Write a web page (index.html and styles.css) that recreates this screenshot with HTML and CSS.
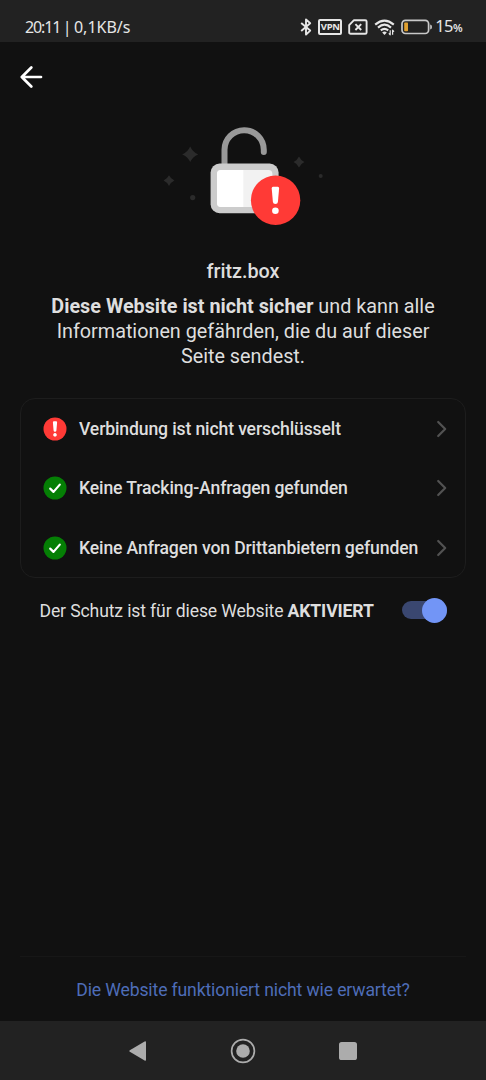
FILE: index.html
```
<!DOCTYPE html>
<html lang="de">

<head>
     <meta charset="UTF-8" />
     <title>Datenschutz - fritz.box</title>
     <meta name="viewport" content="width=device-width, initial-scale=1" />
     <link rel="stylesheet" href="styles.css">
</head>

<body>

     <div class="status-bar">
          <span class="clock"><span class="time">20:11</span> | 0,1KB/s</span>
          <div class="status-icons">
               <svg class="bluetooth" width="12" height="18" viewBox="0 0 12 18">
                    <path d="M1.2 5 L10.2 12.6 L6 16.6 V1.4 L10.2 5.2 L1.2 13" />
               </svg>
               <span class="vpn">VPN</span>
               <svg class="sim" width="20" height="16" viewBox="0 0 20 16">
                    <path d="M6 1.2 H17.2 Q18.6 1.2 18.6 2.6 V13.4 Q18.6 14.8 17.2 14.8 H2.6 Q1.2 14.8 1.2 13.4 V6.2 Z" />
                    <path d="M7.4 5.2 L13.2 11 M13.2 5.2 L7.4 11" />
               </svg>
               <svg class="wifi" width="22" height="18" viewBox="0 0 22 18">
                    <path d="M1.2 6.6 Q10.5 -1.4 19.8 6.6" />
                    <path d="M4 9.6 Q10.5 3.8 17 9.6" />
                    <path d="M6.8 12.4 Q10.5 9.2 14.2 12.4" />
                    <path class="wifi-dot" d="M8.2 14.4 Q10.5 12.8 12.8 14.4 L10.5 17 Z" />
                    <path class="wifi-arrows" d="M16.2 12.2 V16.8 L14.8 15.4 M18.6 16.8 V12.2 L20 13.6" />
               </svg>
               <svg class="battery" width="32" height="16" viewBox="0 0 32 16">
                    <rect class="battery-case" x="1" y="1.3" width="26.6" height="13.2" rx="3.4" />
                    <rect class="battery-level" x="3.2" y="3.6" width="3.8" height="8.6" rx="0.8" />
                    <path class="battery-tip" d="M29.2 5.4 Q31 5.8 31 7.9 Q31 10 29.2 10.4 Z" />
               </svg>
               <span class="percent">15<small>%</small></span>
          </div>
     </div>

     <main>
          <button class="back-btn" aria-label="Zurück">
               <svg width="24" height="24" viewBox="0 0 24 24">
                    <path d="M21 12 H2.5 M11.3 2.5 L1.8 12 L11.3 21.5" />
               </svg>
          </button>

          <svg class="hero" width="190" height="130" viewBox="0 0 190 130">
               <g class="sparkles">
                    <path d="M40.2 36.5 Q42.6 42 48.2 44.4 Q42.6 46.8 40.2 52 Q37.8 46.8 32.2 44.4 Q37.8 42 40.2 36.5 Z" />
                    <path d="M19 65.2 Q20.8 68.8 24.4 70.5 Q20.8 72.2 19 76 Q17.2 72.2 13.6 70.5 Q17.2 68.8 19 65.2 Z" />
                    <path d="M149 46.4 Q150.8 50.2 154.4 51.9 Q150.8 53.6 149 57.4 Q147.2 53.6 143.6 51.9 Q147.2 50.2 149 46.4 Z" />
                    <circle cx="42.7" cy="87.6" r="2.6" />
                    <circle cx="170.7" cy="66" r="2" />
               </g>
               <path class="shackle" d="M74.5 54 V39.8 A19.6 19.6 0 0 1 113.8 39.8 V42" />
               <rect class="lock-edge" x="60.6" y="53.6" width="68" height="49.6" rx="9" />
               <rect class="lock-right" x="67" y="60" width="55.4" height="37" rx="4" />
               <path class="lock-left" d="M93.3 60 V97 H71 Q67 97 67 93 V64 Q67 60 71 60 Z" />
               <circle class="alert" cx="125.6" cy="90.3" r="24.7" />
               <path class="alert-mark" d="M123 76.8 H127.8 Q129.2 76.8 129.1 78.4 L127.9 92 Q127.7 94 125.4 94 Q123.1 94 122.9 92 L121.7 78.4 Q121.6 76.8 123 76.8 Z" />
               <circle class="alert-mark" cx="125.4" cy="100.8" r="3.3" />
          </svg>

          <h1>fritz.box</h1>
          <p class="summary"><b>Diese Website ist nicht sicher</b> und kann alle<br>Informationen gefährden, die du auf dieser<br>Seite sendest.</p>

          <ul class="checks">
               <li>
                    <svg class="badge bad" width="24" height="24" viewBox="0 0 24 24">
                         <circle cx="12" cy="12" r="11.5" />
                         <path class="mark" d="M9.9 5.4 Q9.9 4.2 10.9 4.2 H13.1 Q14.1 4.2 14.1 5.4 L13.4 13.4 Q13.3 14.8 12 14.8 Q10.7 14.8 10.6 13.4 Z M12 16 A1.8 1.8 0 1 1 11.99 16 Z" />
                    </svg>
                    <span>Verbindung ist nicht verschlüsselt</span>
                    <svg class="chevron" width="12" height="18" viewBox="0 0 12 18">
                         <path d="M2.2 2 L9.2 9 L2.2 16" />
                    </svg>
               </li>
               <li>
                    <svg class="badge good" width="24" height="24" viewBox="0 0 24 24">
                         <circle cx="12" cy="12" r="11.5" />
                         <path class="tick" d="M7.2 12.6 L10.5 15.9 L16.8 8.6" />
                    </svg>
                    <span>Keine Tracking-Anfragen gefunden</span>
                    <svg class="chevron" width="12" height="18" viewBox="0 0 12 18">
                         <path d="M2.2 2 L9.2 9 L2.2 16" />
                    </svg>
               </li>
               <li>
                    <svg class="badge good" width="24" height="24" viewBox="0 0 24 24">
                         <circle cx="12" cy="12" r="11.5" />
                         <path class="tick" d="M7.2 12.6 L10.5 15.9 L16.8 8.6" />
                    </svg>
                    <span>Keine Anfragen von Drittanbietern gefunden</span>
                    <svg class="chevron" width="12" height="18" viewBox="0 0 12 18">
                         <path d="M2.2 2 L9.2 9 L2.2 16" />
                    </svg>
               </li>
          </ul>

          <div class="protection">
               <span>Der Schutz ist für diese Website <b>AKTIVIERT</b></span>
               <button class="toggle" role="switch" aria-checked="true" aria-label="Schutz"></button>
          </div>

          <div class="report">
               <a href="#">Die Website funktioniert nicht wie erwartet?</a>
          </div>
     </main>

     <nav class="nav-bar">
          <svg width="26" height="26" viewBox="0 0 26 26">
               <path d="M4.8 12.2 L19.6 3.4 Q21 2.8 21 4.2 V21.8 Q21 23.2 19.6 22.6 L4.8 13.8 Q3.6 13 4.8 12.2 Z" />
          </svg>
          <svg width="26" height="26" viewBox="0 0 26 26">
               <circle class="ring" cx="13" cy="13" r="11.4" />
               <circle cx="13" cy="13" r="6.8" />
          </svg>
          <svg width="26" height="26" viewBox="0 0 26 26">
               <rect x="4" y="4" width="18" height="18" rx="2.6" />
          </svg>
     </nav>

     <script>
          const toggle = document.querySelector(".toggle");

          toggle.addEventListener("click", () => {
               const on = toggle.getAttribute("aria-checked") === "true";
               toggle.setAttribute("aria-checked", String(!on));
          });
     </script>

</body>

</html>
```
FILE: styles.css
```
:root {
     --bg: #111111;
     --bar: #222222;
     --line: #1d1d1d;
     --text: #dedede;
     --icon: #e6e6e6;
     --nav: #acacac;
     --red: #ff3a36;
     --green: #057f05;
     --blue: #7295f6;
}

* {
     box-sizing: border-box;
     margin: 0;
     padding: 0;
}

body {
     display: flex;
     flex-direction: column;
     height: 100vh;
     overflow: hidden;
     font-family: Roboto, sans-serif;
     background: var(--bg);
     color: var(--text);
}

button {
     border: none;
     background: none;
     cursor: pointer;
}

svg {
     display: block;
     flex: none;
}

.status-bar {
     display: flex;
     justify-content: space-between;
     height: 42px;
     padding: 12px 24px 0 25px;
     background: var(--bar);
     color: var(--icon);
     font-family: "Noto Sans", sans-serif;
}

.clock {
     font-size: 16px;
     line-height: 30px;
     word-spacing: -1.8px;
     white-space: nowrap;
}

.time {
     letter-spacing: -1.1px;
}

.status-icons {
     display: flex;
     align-items: center;
     height: 30px;
}

.status-icons path {
     fill: none;
     stroke: var(--icon);
     stroke-width: 1.9;
     stroke-linejoin: round;
}

.vpn {
     width: 24px;
     height: 16px;
     margin-left: 6px;
     border: 2px solid var(--icon);
     border-radius: 2px;
     font-size: 9.5px;
     font-weight: 700;
     line-height: 12px;
     letter-spacing: -0.3px;
     text-align: center;
}

.sim {
     margin-left: 6px;
}

.wifi {
     margin-left: 6px;
}

.status-icons .wifi path {
     stroke-width: 2.1;
}

.status-icons .wifi .wifi-dot {
     fill: var(--icon);
     stroke: none;
}

.status-icons .wifi .wifi-arrows {
     stroke-width: 1.2;
}

.battery {
     margin-left: 5px;
}

.battery-case {
     fill: none;
     stroke: #c8c8c8;
     stroke-width: 1.7;
}

.battery-level {
     fill: #e0a030;
}

.status-icons .battery-tip {
     fill: #c8c8c8;
     stroke: none;
}

.percent {
     margin-left: 2px;
     font-size: 16.5px;
     line-height: 32px;
     letter-spacing: -0.6px;
}

.percent small {
     font-size: 11px;
     font-weight: 600;
}

main {
     flex: 1;
     display: flex;
     flex-direction: column;
     padding: 0 20px;
}

.back-btn {
     width: 24px;
     height: 24px;
     margin-top: 23px;
}

.back-btn path {
     fill: none;
     stroke: white;
     stroke-width: 2.7;
     stroke-linecap: round;
     stroke-linejoin: round;
}

.hero {
     margin: 21px 0 0 130px;
}

.sparkles {
     fill: #2b2b2b;
}

.shackle {
     fill: none;
     stroke: #999999;
     stroke-width: 6;
     stroke-linecap: round;
}

.lock-edge {
     fill: #cccccc;
}

.lock-right {
     fill: #f2f2f2;
}

.lock-left {
     fill: white;
}

.alert {
     fill: var(--red);
}

.alert-mark {
     fill: white;
}

h1 {
     margin-top: 20px;
     font-size: 19.8px;
     font-weight: 500;
     line-height: 24px;
     text-align: center;
}

.summary {
     margin-top: 11px;
     font-size: 19.8px;
     line-height: 24.75px;
     text-align: center;
     white-space: nowrap;
}

.checks {
     height: 180px;
     margin-top: 29px;
     border: 1px solid var(--line);
     border-radius: 15px;
     list-style: none;
}

.checks li {
     display: flex;
     align-items: center;
     height: 59.4px;
     padding: 0 18px 0 22px;
     font-size: 17.6px;
     font-weight: 500;
     letter-spacing: -0.13px;
     white-space: nowrap;
}

.checks span {
     flex: 1;
     margin-left: 12px;
}

.bad circle {
     fill: var(--red);
}

.good circle {
     fill: var(--green);
}

.mark {
     fill: white;
}

.tick {
     fill: none;
     stroke: white;
     stroke-width: 2.2;
     stroke-linecap: round;
     stroke-linejoin: round;
}

.chevron {
     margin-right: -1px;
}

.chevron path {
     fill: none;
     stroke: #525252;
     stroke-width: 2.2;
     stroke-linecap: round;
     stroke-linejoin: round;
}

.protection {
     display: flex;
     align-items: center;
     justify-content: space-between;
     height: 26px;
     margin-top: 19px;
     padding: 0 19px 0 19.5px;
     font-size: 17.6px;
     letter-spacing: -0.13px;
     white-space: nowrap;
}

.protection span {
     padding-top: 1px;
}

.toggle {
     position: relative;
     width: 45px;
     height: 18px;
     border-radius: 9px;
     background: #3a4770;
}

.toggle::after {
     content: "";
     position: absolute;
     top: -3.5px;
     right: 0;
     width: 25px;
     height: 25px;
     border-radius: 50%;
     background: var(--blue);
}

.toggle[aria-checked="false"] {
     background: #444;
}

.toggle[aria-checked="false"]::after {
     right: auto;
     left: 0;
     background: #aaa;
}

.report {
     height: 65px;
     margin-top: auto;
     padding-top: 21px;
     border-top: 1px solid #171717;
     font-size: 17.6px;
     line-height: 24px;
     letter-spacing: -0.13px;
     text-align: center;
}

.report a {
     color: #4e6db8;
     text-decoration: none;
}

.nav-bar {
     display: flex;
     justify-content: center;
     gap: 79px;
     height: 59px;
     padding: 17px 1px 0 0;
     background: var(--bar);
}

.nav-bar svg {
     fill: var(--nav);
}

.nav-bar .ring {
     fill: none;
     stroke: var(--nav);
     stroke-width: 1.7;
}
```
